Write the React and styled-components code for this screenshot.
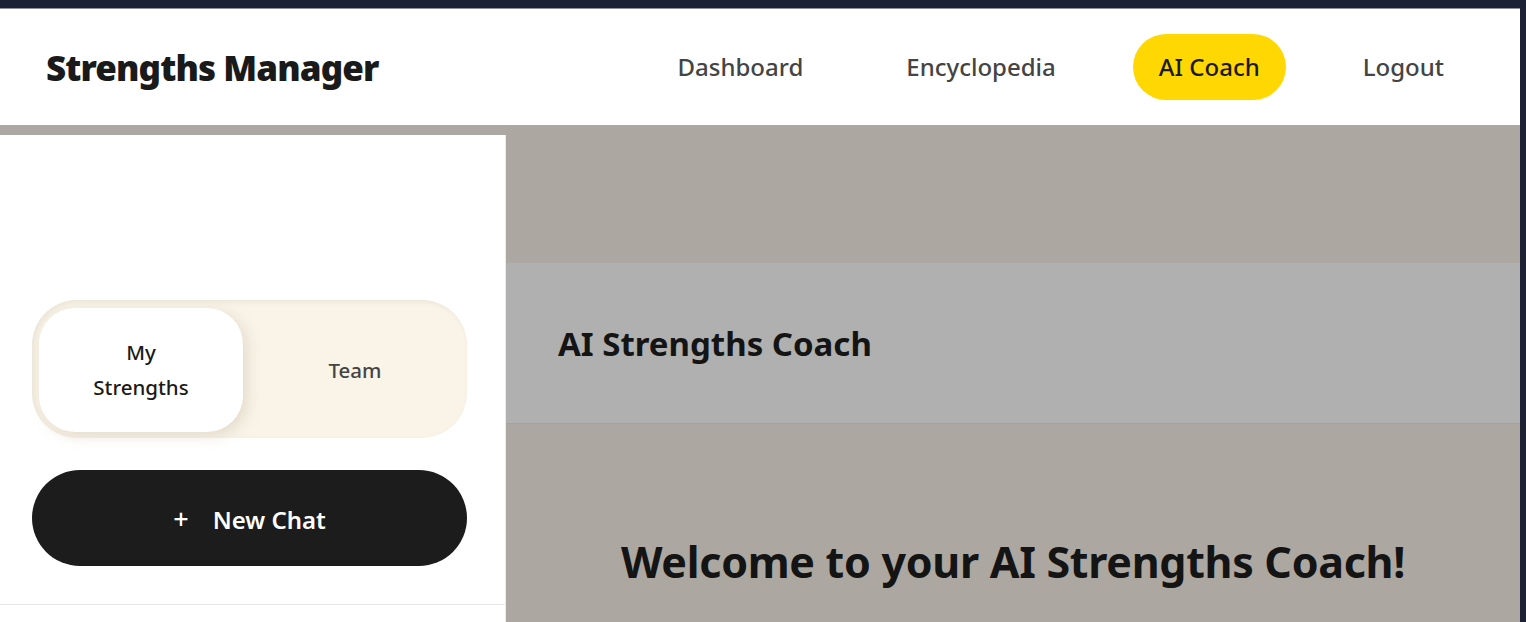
import React, { useState } from 'react';
import styled, { createGlobalStyle } from 'styled-components';

const GlobalStyle = createGlobalStyle`
  html, body {
    margin: 0;
    padding: 0;
    height: 100%;
    overflow: hidden;
    background: #1c2233;
  }
  body {
    font-family: "Noto Sans", "Open Sans", sans-serif;
  }
  * {
    box-sizing: border-box;
  }
`;

const Frame = styled.div`
  margin: 8px 6px 0 0;
  height: calc(100vh - 8px);
  background: #aca8a1;
  display: flex;
  flex-direction: column;
  border-top: 1px solid #8a90a0;
`;

const Header = styled.header`
  height: 116px;
  flex-shrink: 0;
  background: #ffffff;
  display: flex;
  align-items: center;
  justify-content: space-between;
  padding: 0 50px 0 46px;
`;

const Logo = styled.h1`
  margin: 0;
  font-size: 35px;
  font-weight: 900;
  color: #1a1a1a;
  letter-spacing: -0.9px;
`;

const Nav = styled.nav`
  display: flex;
  align-items: center;
  gap: 51px;
`;

const NavLink = styled.a`
  display: flex;
  align-items: center;
  height: 66px;
  padding: 0 26px 2px;
  border-radius: 33px;
  font-size: 24px;
  font-weight: 500;
  color: ${({ $active }) => ($active ? '#1a1a1a' : '#444444')};
  background: ${({ $active }) => ($active ? '#ffd703' : 'transparent')};
  text-decoration: none;
  cursor: pointer;
`;

const Body = styled.div`
  flex: 1;
  display: flex;
  min-height: 0;
`;

const Sidebar = styled.aside`
  width: 506px;
  flex-shrink: 0;
  margin-top: 10px;
  background: #ffffff;
  border-right: 1px solid #ececec;
  display: flex;
  flex-direction: column;
  padding-top: 165px;
`;

const SidebarInner = styled.div`
  padding: 0 38px 38px 32px;
  display: flex;
  flex-direction: column;
  gap: 32px;
  border-bottom: 1px solid #e6e6e6;
`;

const Toggle = styled.div`
  display: grid;
  grid-template-columns: 204px 1fr;
  height: 138px;
  padding: 8px 0 6px 7px;
  background: #f9f3e8;
  border-radius: 45px;
  box-shadow: inset 2px 2px 4px rgba(200, 190, 170, 0.25);
`;

const ToggleOption = styled.button`
  border: none;
  border-radius: 36px;
  font-family: inherit;
  font-size: 20.5px;
  line-height: 35px;
  font-weight: 500;
  color: ${({ $active }) => ($active ? '#1a1a1a' : '#444444')};
  background: ${({ $active }) => ($active ? '#ffffff' : 'transparent')};
  box-shadow: ${({ $active }) => ($active ? '4px 4px 14px rgba(190, 175, 150, 0.35)' : 'none')};
  padding: 0 50px;
  cursor: pointer;
`;

const NewChatButton = styled.button`
  height: 96px;
  border: none;
  border-radius: 48px;
  background: #1c1c1c;
  color: #ffffff;
  font-family: inherit;
  font-size: 24px;
  font-weight: 600;
  display: flex;
  align-items: center;
  justify-content: center;
  gap: 24px;
  padding-top: 3px;
  cursor: pointer;
`;

const Plus = styled.span`
  font-size: 27px;
  font-weight: 500;
  margin-top: -2px;
`;

const Main = styled.main`
  flex: 1;
  display: flex;
  flex-direction: column;
  padding-top: 138px;
`;

const ChatHeader = styled.div`
  height: 161px;
  background: #b0b0b0;
  border-bottom: 1px solid #a2a2a2;
  display: flex;
  align-items: center;
  padding: 0 52px;
`;

const ChatTitle = styled.h2`
  margin: 0;
  font-size: 33px;
  font-weight: 700;
  color: #141414;
`;

const Welcome = styled.div`
  padding-top: 108px;
  text-align: center;
`;

const WelcomeTitle = styled.h2`
  margin: 0;
  font-size: 43px;
  font-weight: 700;
  color: #141414;
  letter-spacing: -0.3px;
`;

export default function App() {
  const [tab, setTab] = useState('mine');
  const links = ['Dashboard', 'Encyclopedia', 'AI Coach', 'Logout'];

  return (
    <>
      <GlobalStyle />
      <Frame>
        <Header>
          <Logo>Strengths Manager</Logo>
          <Nav>
            {links.map((l) => (
              <NavLink key={l} $active={l === 'AI Coach'}>
                {l}
              </NavLink>
            ))}
          </Nav>
        </Header>
        <Body>
          <Sidebar>
            <SidebarInner>
              <Toggle>
                <ToggleOption $active={tab === 'mine'} onClick={() => setTab('mine')}>
                  My Strengths
                </ToggleOption>
                <ToggleOption $active={tab === 'team'} onClick={() => setTab('team')}>
                  Team
                </ToggleOption>
              </Toggle>
              <NewChatButton>
                <Plus>+</Plus>
                New Chat
              </NewChatButton>
            </SidebarInner>
          </Sidebar>
          <Main>
            <ChatHeader>
              <ChatTitle>AI Strengths Coach</ChatTitle>
            </ChatHeader>
            <Welcome>
              <WelcomeTitle>Welcome to your AI Strengths Coach!</WelcomeTitle>
            </Welcome>
          </Main>
        </Body>
      </Frame>
    </>
  );
}
